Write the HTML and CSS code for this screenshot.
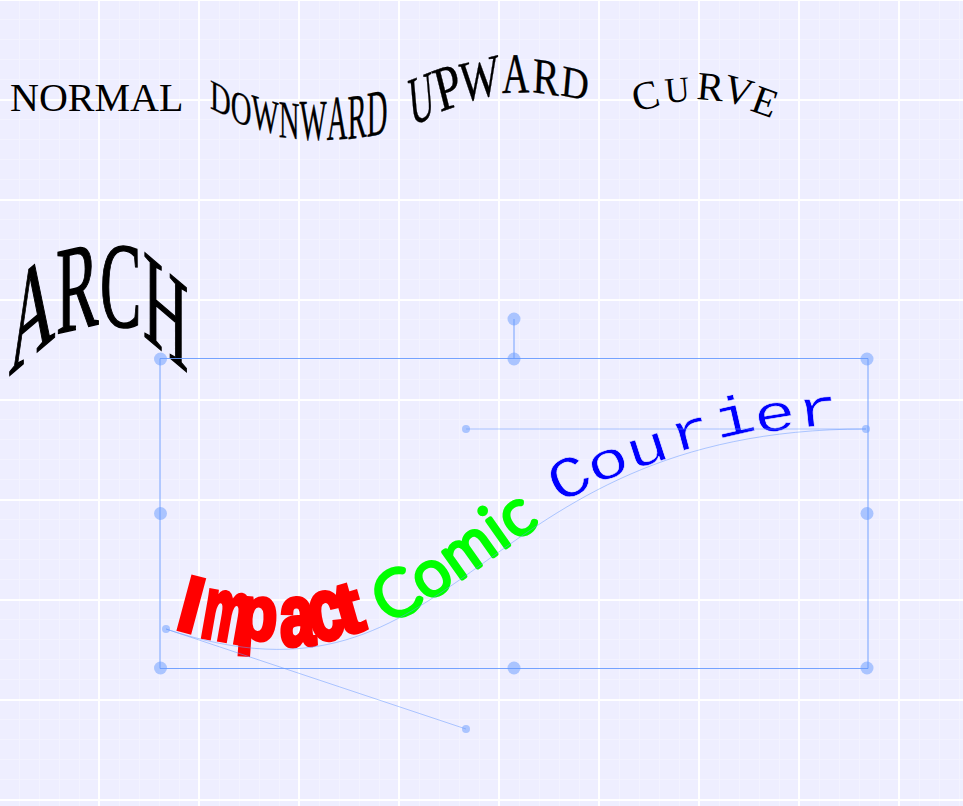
FILE: index.html

```html
<!DOCTYPE html>
<html lang="en">
    <head>
        <meta charset="UTF-8" />
        <title>Text warp</title>
        <link rel="stylesheet" href="styles.css">
    </head>
    <body>
        <svg class="canvas" width="963" height="806" viewBox="0 0 963 806">
            <defs>
                <path id="curve" d="M166 629C466 729 466 429 866 429" />
            </defs>

            <text class="serif" x="10" y="111">NORMAL</text>

            <g class="serif warp">
                <text transform="matrix(.72 .36 0 1.07 210 108)">D</text>
                <text transform="matrix(.72 .27 0 1.15 230.8 120)">O</text>
                <text transform="matrix(.72 .22 0 1.22 251.6 127)">W</text>
                <text transform="matrix(.72 .08 0 1.33 278.8 137)">N</text>
                <text transform="matrix(.72 0 0 1.45 299.6 140)">W</text>
                <text transform="matrix(.72 -.04 0 1.58 326.8 140)">A</text>
                <text transform="matrix(.72 -.11 0 1.6 347.6 139.5)">R</text>
                <text transform="matrix(.72 -.15 0 1.64 366.8 137)">D</text>
            </g>

            <g class="serif warp">
                <text transform="matrix(.85 -.34 .15 1.7 411 126)">U</text>
                <text transform="matrix(1.15 -.4 .38 1.52 440 112)">P</text>
                <text transform="matrix(1.05 -.26 .1 1.45 461 103)">W</text>
                <text transform="matrix(.95 -.02 0 1.42 502 93)">A</text>
                <text transform="matrix(1 .15 -.05 1.26 532 92)">R</text>
                <text transform="matrix(.95 .2 -.1 1.1 560 95)">D</text>
            </g>

            <g class="serif">
                <text transform="translate(636 112) rotate(-15)">C</text>
                <text transform="translate(666 103) rotate(-5) scale(.85 .9)">U</text>
                <text transform="translate(696 99) rotate(5)">R</text>
                <text transform="translate(721 100) rotate(15)">V</text>
                <text transform="translate(749 110) rotate(20)">E</text>
            </g>

            <g class="serif warp arch">
                <text transform="matrix(1.6 -1.36 0 3.4 9 376)">A</text>
                <text transform="matrix(1.6 -.37 0 3.1 56 334)">R</text>
                <text transform="matrix(1.55 .05 0 3.05 100 326)">C</text>
                <text transform="matrix(1.57 1.33 0 3.2 143 335)">H</text>
            </g>

            <g class="impact">
                <text transform="translate(174 628) rotate(15) scale(1.2 1.23)">I</text>
                <text transform="translate(199 636) rotate(10) scale(.82 1.38)">m</text>
                <text transform="translate(236 638) rotate(4) scale(1.02 1.2)">p</text>
                <text transform="translate(281 646) rotate(-3) scale(.98 1.36)">a</text>
                <text transform="translate(313 642) rotate(-10) scale(.98 1.36)">c</text>
                <text transform="translate(342 636) rotate(-16) scale(1.25 1.15)">t</text>
            </g>
            <text class="comic"><textPath href="#curve" startOffset="228">Comic</textPath></text>
            <g class="courier">
                <text transform="translate(559 504) rotate(-27) scale(1.2 1)">C</text>
                <text transform="translate(594 485) rotate(-22) scale(1.2 .9)">o</text>
                <text transform="translate(632 470) rotate(-18) scale(1.2 .9)">u</text>
                <text transform="translate(674 453) rotate(-15) scale(1.2 .9)">r</text>
                <text transform="translate(717.500 439) rotate(-13) scale(1.2 .95)">i</text>
                <text transform="translate(756.500 434) rotate(-9) scale(1.2 .9)">e</text>
                <text transform="translate(798.500 428) rotate(-6) scale(1.2 .9)">r</text>
            </g>

            <!-- selection frame -->
            <use href="#curve" class="path-line" />
            <path class="handle-line" d="M166 629L466 729M466 429H866" />
            <path class="frame" d="M160 358.500H868V668.500H160ZM514 358.500V319" />
            <g class="grip">
                <circle cx="160.500" cy="359" r="6.500" />
                <circle cx="514" cy="359" r="6.500" />
                <circle cx="867" cy="359" r="6.500" />
                <circle cx="160.500" cy="513.500" r="6.500" />
                <circle cx="867" cy="513.500" r="6.500" />
                <circle cx="160.500" cy="668" r="6.500" />
                <circle cx="514" cy="668" r="6.500" />
                <circle cx="867" cy="668" r="6.500" />
                <circle cx="514" cy="319" r="6.500" />
            </g>
            <g class="grip">
                <circle cx="166" cy="629" r="4" />
                <circle cx="466" cy="429" r="4" />
                <circle cx="866" cy="429" r="4" />
                <circle cx="466" cy="729" r="4" />
            </g>
        </svg>
    </body>
</html>
```

FILE: styles.css

```css
html, body {
    margin: 0;
    height: 100%;
    overflow: hidden;
}

body {
    background-color: #eeeeff;
    background-image:
        linear-gradient(to right, #fff 2px, transparent 2px),
        linear-gradient(to bottom, #fff 2px, transparent 2px),
        linear-gradient(to right, #f3f3ff 1px, transparent 1px),
        linear-gradient(to bottom, #f3f3ff 1px, transparent 1px);
    background-size: 100px 100px, 100px 100px, 20px 20px, 20px 20px;
    background-position: -2px 0, 0 -1px, -1px 0, 0 -1px;
}

.canvas {
    display: block;
}

.serif {
    font-family: "Liberation Serif", serif;
    font-size: 40px;
    fill: #000;
}

.warp {
    stroke: #000;
    stroke-width: .25px;
}

.arch {
    stroke-width: .5px;
}

.impact {
    font-family: "Liberation Sans", sans-serif;
    font-weight: 700;
    font-size: 64px;
    fill: #f00;
    stroke: #f00;
    stroke-width: 3.500px;
}

.comic {
    font-family: Lato, sans-serif;
    font-weight: 300;
    font-size: 64px;
    letter-spacing: 2px;
    fill: #0f0;
    stroke: #0f0;
    stroke-width: 5px;
    stroke-linejoin: round;
}

.courier {
    font-family: "Liberation Mono", monospace;
    font-size: 58px;
    fill: #00f;
    stroke: #eeeeff;
    stroke-width: .6px;
}

.path-line, .handle-line {
    fill: none;
    stroke: #6699ff;
    stroke-opacity: .5;
}

.frame {
    fill: none;
    stroke: #6699ff;
    stroke-opacity: .9;
}

.grip circle {
    fill: #6699ff;
    fill-opacity: .5;
}
```
